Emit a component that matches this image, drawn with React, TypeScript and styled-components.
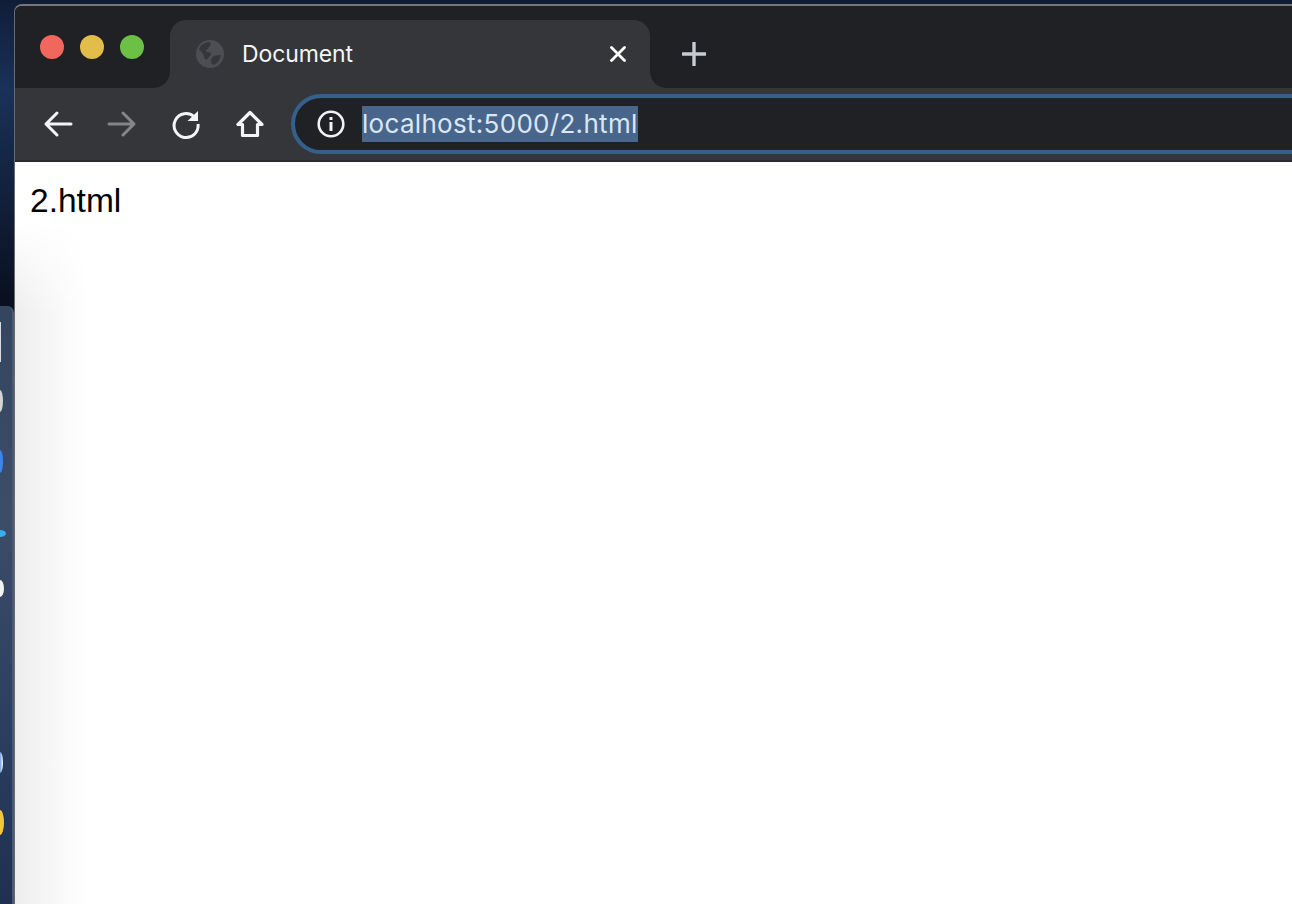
import React from "react";
import styled, { createGlobalStyle } from "styled-components";

const Global = createGlobalStyle`
  html, body { margin: 0; padding: 0; width: 100%; height: 100%; overflow: hidden; background: #0d1a30; }
  #root { width: 1292px; height: 904px; }
`;

const Desktop = styled.div`
  width: 1292px;
  height: 904px;
  display: flex;
  overflow: hidden;
  padding-top: 4px;
  box-sizing: border-box;
  background: linear-gradient(180deg, #101d38 0%, #1a3158 10%, #0a1020 33%, #0a1020 100%);
  font-family: "Inter", "Liberation Sans", sans-serif;
`;

const DockColumn = styled.div`
  width: 14px;
  flex: none;
  padding-top: 302px;
  box-sizing: border-box;
`;

const Dock = styled.div`
  width: 14px;
  height: 598px;
  box-sizing: border-box;
  border-top-right-radius: 7px;
  border-right: 2px solid #4a5a72;
  background: linear-gradient(180deg, #33455f 0%, #3c4d68 35%, #2b3f60 70%, #1f3050 100%);
  overflow: hidden;
  display: flex;
  flex-direction: column;
`;

const DockTile = styled.div`
  width: 1px;
  height: 40px;
  margin-top: 16px;
  background: #d8dce2;
  flex: none;
`;

const DockIcon = styled.div<{ $height: number; $top: number; $show: number; $color: string }>`
  width: ${(p) => p.$show}px;
  height: ${(p) => p.$height}px;
  margin-top: ${(p) => p.$top}px;
  border-radius: 0 100% 100% 0 / 0 50% 50% 0;
  background: ${(p) => p.$color};
  filter: blur(0.4px);
  flex: none;
`;

const Window = styled.div`
  flex: 1;
  min-width: 0;
  display: flex;
  flex-direction: column;
  border-top-left-radius: 8px;
  border-top: 2px solid #77787a;
  border-left: 1px solid #6a6b6d;
  overflow: hidden;
  background: #202124;
`;

const TabStrip = styled.div`
  height: 82px;
  flex: none;
  display: flex;
  align-items: flex-end;
  background: #202124;
`;

const Lights = styled.div`
  width: 155px;
  height: 82px;
  flex: none;
  box-sizing: border-box;
  padding: 29px 0 0 25px;
  display: flex;
  gap: 16px;
`;

const Light = styled.div<{ $color: string }>`
  width: 24px;
  height: 24px;
  border-radius: 50%;
  background: ${(p) => p.$color};
`;

const Tab = styled.div`
  width: 480px;
  height: 68px;
  flex: none;
  box-sizing: border-box;
  padding: 0 24px 0 26px;
  display: flex;
  align-items: center;
  background: #35363a;
  border-radius: 16px 16px 0 0;
  position: relative;
  &::before, &::after {
    content: "";
    position: absolute;
    bottom: 0;
    width: 16px;
    height: 16px;
    background: radial-gradient(circle at var(--cx) 0, #202124 15.5px, #35363a 16px);
  }
  &::before { left: -16px; --cx: 0; }
  &::after { right: -16px; --cx: 100%; }
`;

const TabTitle = styled.span`
  margin-left: 18px;
  flex: 1;
  color: #f4f5f6;
  font-size: 23px;
  letter-spacing: -0.1px;
  line-height: 28px;
`;

const NewTab = styled.button`
  all: unset;
  width: 24px;
  height: 24px;
  margin: 0 0 22px 32px;
  display: flex;
`;

const Toolbar = styled.div`
  height: 72px;
  flex: none;
  box-sizing: border-box;
  padding: 0 0 0 27px;
  display: flex;
  align-items: center;
  background: #35363a;
`;

const NavButton = styled.button`
  all: unset;
  width: 32px;
  height: 32px;
  margin-right: 32px;
  display: flex;
  flex: none;
`;

const Omnibox = styled.div`
  flex: 1;
  height: 60px;
  margin: 0 -40px 0 -7px;
  box-sizing: border-box;
  display: flex;
  align-items: center;
  padding-left: 22px;
  background: #202124;
  border: 4px solid #36608c;
  border-radius: 30px;
`;

const Url = styled.span`
  margin-left: 17px;
  height: 36px;
  line-height: 36px;
  color: #dbe6f5;
  background: #48668c;
  font-size: 26px;
  letter-spacing: 0.3px;
  white-space: nowrap;
`;

const Divider = styled.div`
  height: 2px;
  flex: none;
  background: #2a2b2e;
`;

const Page = styled.main`
  flex: 1;
  position: relative;
  background: #fff;
  padding: 20px 0 0 15px;
  font-family: "Liberation Sans", Arial, sans-serif;
  font-size: 33.5px;
  line-height: 38px;
  color: #000;
`;

const DockShadow = styled.div`
  position: absolute;
  left: 0;
  top: 60px;
  bottom: 0;
  width: 72px;
  background: linear-gradient(90deg, #ededed 0%, #f5f5f5 40%, #ffffff 100%);
  -webkit-mask-image: linear-gradient(180deg, transparent 0, #000 90px);
  mask-image: linear-gradient(180deg, transparent 0, #000 90px);
`;

const PageText = styled.span`
  position: relative;
`;

const Icon = styled.svg`
  display: block;
  flex: none;
`;

export default function App() {
  return (
    <>
      <Global />
      <Desktop>
        <DockColumn>
          <Dock>
            <DockTile />
            <DockIcon $height={22} $top={28} $show={3} $color="#d2d4d6" />
            <DockIcon $height={23} $top={38} $show={3} $color="#3b86ea" />
            <DockIcon $height={7} $top={57} $show={6} $color="#38aef0" />
            <DockIcon $height={17} $top={43} $show={4} $color="#f2f3f5" />
            <DockIcon $height={21} $top={155} $show={3} $color="linear-gradient(90deg, #6fa0e0, #ffffff)" />
            <DockIcon $height={25} $top={37} $show={4} $color="#f4c340" />
          </Dock>
        </DockColumn>
        <Window>
          <TabStrip>
            <Lights>
              <Light $color="#f2675c" />
              <Light $color="#e2bd49" />
              <Light $color="#6dc046" />
            </Lights>
            <Tab>
              <Icon width="28" height="28" viewBox="0 0 28 28">
                <circle cx="14" cy="14" r="14" fill="#4c4e53" />
                <path
                  d="M3 9c2-5 7-7 11-7 1 2 1 4-1 5-1 1-1 3-3 3-1 1 1 2 2 2 2 0 4 2 2 4-2 1-2 4-4 4-2-1-2-4-3-6C6 12 4 11 3 9ZM18 16c2-1 5-1 7-1-1 4-3 8-7 10-2-1-3-2-3-4 0-2 1-4 3-5Z"
                  fill="#35363a"
                />
              </Icon>
              <TabTitle>Document</TabTitle>
              <Icon width="16" height="16" viewBox="0 0 16 16">
                <path d="M1.5 1.5l13 13M14.5 1.5l-13 13" stroke="#fff" strokeWidth="2.8" strokeLinecap="round" />
              </Icon>
            </Tab>
            <NewTab>
              <Icon width="24" height="24" viewBox="0 0 24 24">
                <path d="M12 1v22M1 12h22" stroke="#c8cbcf" strokeWidth="3.4" strokeLinecap="round" />
              </Icon>
            </NewTab>
          </TabStrip>
          <Toolbar>
            <NavButton>
              <Icon width="32" height="32" viewBox="0 0 32 32">
                <path d="M29 16H4M15 5L4 16l11 11" fill="none" stroke="#f3f4f5" strokeWidth="3" strokeLinecap="round" strokeLinejoin="round" />
              </Icon>
            </NavButton>
            <NavButton>
              <Icon width="32" height="32" viewBox="0 0 32 32">
                <path d="M3 16h25M17 5l11 11-11 11" fill="none" stroke="#85868a" strokeWidth="3" strokeLinecap="round" strokeLinejoin="round" />
              </Icon>
            </NavButton>
            <NavButton>
              <Icon width="32" height="32" viewBox="0 0 32 32">
                <path d="M24.5 9A12 12 0 1 0 28 16" fill="none" stroke="#f3f4f5" strokeWidth="3" />
                <path d="M28 3V13H17.5Z" fill="#f3f4f5" />
              </Icon>
            </NavButton>
            <NavButton>
              <Icon width="32" height="32" viewBox="0 0 32 32">
                <path d="M16 4.5L4 16.5h4.5V27.5h15V16.5H28Z" fill="none" stroke="#f3f4f5" strokeWidth="3.2" strokeLinejoin="round" />
              </Icon>
            </NavButton>
            <Omnibox>
              <Icon width="28" height="28" viewBox="0 0 28 28">
                <circle cx="14" cy="14" r="12.3" fill="none" stroke="#f1f2f3" strokeWidth="2.6" />
                <path d="M12.5 12h3v9h-3zM12.5 7h3v3h-3z" fill="#f1f2f3" />
              </Icon>
              <Url>localhost:5000/2.html</Url>
            </Omnibox>
          </Toolbar>
          <Divider />
          <Page>
            <DockShadow />
            <PageText>2.html</PageText>
          </Page>
        </Window>
      </Desktop>
    </>
  );
}
